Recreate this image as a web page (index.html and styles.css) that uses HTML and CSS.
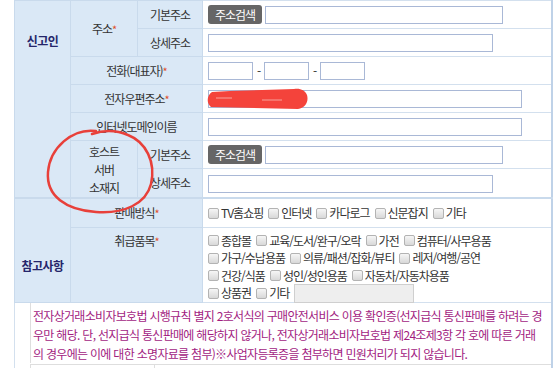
FILE: index.html
```html
<!DOCTYPE html>
<html lang="ko">
<head>
    <meta charset="UTF-8">
    <meta name="viewport" content="width=device-width, initial-scale=1.0">
    <title>통신판매업 신고</title>
    <link rel="stylesheet" href="styles.css">
</head>
<body>
    <div class="page">
        <table class="form">
            <colgroup>
                <col class="c-group">
                <col class="c-label">
                <col class="c-sub">
                <col>
            </colgroup>
            <tr>
                <th rowspan="7" class="group group-top">신고인</th>
                <th rowspan="2">주소<span class="req">*</span></th>
                <th>기본주소</th>
                <td><button class="btn-addr" type="button">주소검색</button><input class="txt w-addr" type="text"></td>
            </tr>
            <tr>
                <th>상세주소</th>
                <td><input class="txt w-detail" type="text"></td>
            </tr>
            <tr>
                <th colspan="2">전화(대표자)<span class="req">*</span></th>
                <td>
                    <input class="txt w-tel" type="text"><span class="dash">-</span><input class="txt w-tel" type="text"><span class="dash">-</span><input class="txt w-tel" type="text">
                </td>
            </tr>
            <tr>
                <th colspan="2">전자우편주소<span class="req">*</span></th>
                <td><input class="txt w-long" type="text"></td>
            </tr>
            <tr>
                <th colspan="2">인터넷도메인이름</th>
                <td><input class="txt w-long" type="text"></td>
            </tr>
            <tr>
                <th rowspan="2" class="multi">호스트<br>서버<br>소재지</th>
                <th>기본주소</th>
                <td><button class="btn-addr" type="button">주소검색</button><input class="txt w-addr" type="text"></td>
            </tr>
            <tr>
                <th>상세주소</th>
                <td><input class="txt w-detail" type="text"></td>
            </tr>
            <tr class="sep">
                <th rowspan="2" class="group group-ref">참고사항</th>
                <th colspan="2">판매방식<span class="req">*</span></th>
                <td>
                    <div class="chk-line">
                        <label class="chk"><input type="checkbox">TV홈쇼핑</label>
                        <label class="chk"><input type="checkbox">인터넷</label>
                        <label class="chk"><input type="checkbox">카다로그</label>
                        <label class="chk"><input type="checkbox">신문잡지</label>
                        <label class="chk"><input type="checkbox">기타</label>
                    </div>
                </td>
            </tr>
            <tr>
                <th colspan="2" class="top">취급품목<span class="req">*</span></th>
                <td class="items">
                    <div class="chk-line">
                        <label class="chk"><input type="checkbox">종합몰</label>
                        <label class="chk"><input type="checkbox">교육/도서/완구/오락</label>
                        <label class="chk"><input type="checkbox">가전</label>
                        <label class="chk"><input type="checkbox">컴퓨터/사무용품</label>
                    </div>
                    <div class="chk-line">
                        <label class="chk"><input type="checkbox">가구/수납용품</label>
                        <label class="chk"><input type="checkbox">의류/패션/잡화/뷰티</label>
                        <label class="chk"><input type="checkbox">레저/여행/공연</label>
                    </div>
                    <div class="chk-line">
                        <label class="chk"><input type="checkbox">건강/식품</label>
                        <label class="chk"><input type="checkbox">성인/성인용품</label>
                        <label class="chk"><input type="checkbox">자동차/자동차용품</label>
                    </div>
                    <div class="chk-line">
                        <label class="chk"><input type="checkbox">상품권</label>
                        <label class="chk"><input type="checkbox">기타</label>
                        <input class="txt w-etc" type="text" disabled>
                    </div>
                </td>
            </tr>
            <tr>
                <td colspan="4" class="notice-wrap">
                    <div class="notice">전자상거래소비자보호법 시행규칙 별지 2호서식의 구매안전서비스 이용 확인증(선지급식 통신판매를 하려는 경우만 해당. 단, 선지급식 통신판매에 해당하지 않거나, 전자상거래소비자보호법 제24조제3항 각 호에 따른 거래<br>의 경우에는 이에 대한 소명자료를 첨부)※사업자등록증을 첨부하면 민원처리가 되지 않습니다.</div>
                    <div class="next-row"><span class="next-label"></span></div>
                </td>
            </tr>
        </table>

        <!-- hand-drawn marks on the screenshot -->
        <svg class="marks" width="558" height="368" viewBox="0 0 558 368">
            <path class="scribble" d="M212 92 C207 95 206 103 211 107 L298 109 C305 108 309 102 307 95 C305 90 300 88 294 89 L230 91 Z"/>
            <path class="line-fade" d="M216 98 L232 98 M262 100 L282 100"/>
            <path class="circle" d="M96 131 C72 128 50 148 48 172 C46 196 66 210 96 212 C124 214 146 204 151 184 C156 162 146 142 128 135 C116 130 104 130 92 134"/>
        </svg>
    </div>
</body>
</html>
```

FILE: styles.css
```css
body {
    margin: 0;
    background: #fff;
    font-family: "Noto Sans CJK KR", "Noto Sans", sans-serif;
    font-size: 12px;
    letter-spacing: -1px;
    color: #333;
}
.page {
    position: relative;
    padding-left: 14px;
    height: 368px;
    overflow: hidden;
}
.form {
    width: 539px;
    table-layout: fixed;
    border-collapse: collapse;
    border-right: 2px solid #bfd2e8;
}
.c-group { width: 56px; }
.c-label { width: 67px; }
.c-sub { width: 65px; }
.form th,
.form td {
    border: 1px solid #c9daec;
    height: 27px;
    padding: 0;
    line-height: 16px;
}
.form th {
    background: #dae8f6;
    font-weight: normal;
    text-align: center;
}
.form td {
    background: #fff;
    padding-left: 5px;
    border-color: #d3e0ee;
}
.form th.group {
    vertical-align: top;
    font-weight: bold;
    color: #25256a;
    letter-spacing: -0.5px;
}
.form th.group-top { padding-top: 32px; }
.form th.group-ref { padding-top: 59px; }
.form th.multi { line-height: 18px; padding-top: 2px; }
.form th.top { vertical-align: top; padding-top: 5px; }
.form .sep th,
.form .sep td { border-top: 2px solid #c9daec; height: 28px; }
.req { color: #e0502a; font-size: 11px; }

.txt {
    box-sizing: border-box;
    height: 18px;
    margin: 0;
    padding: 0 3px;
    border: 1px solid #a9b8d6;
    background: #fff;
    vertical-align: middle;
}
.w-addr { width: 238px; }
.w-detail { width: 285px; }
.w-tel { width: 45px; }
.w-long { width: 314px; }
.w-etc {
    width: 120px;
    height: 19px;
    background: #eeeeee;
    border-color: #cfcfcf;
}
.dash {
    display: inline-block;
    width: 11px;
    text-align: center;
    vertical-align: middle;
}
.btn-addr {
    box-sizing: border-box;
    width: 54px;
    height: 19px;
    margin: 0 3px 0 0;
    padding: 0;
    border: 0;
    border-radius: 3px;
    background: #666;
    color: #fff;
    font: inherit;
    letter-spacing: -1px;
    vertical-align: middle;
}

.chk-line {
    display: flex;
    align-items: center;
    gap: 5px;
    height: 17.5px;
}
.form td.items { vertical-align: top; padding-top: 4px; }
.chk {
    display: inline-flex;
    align-items: center;
    white-space: nowrap;
}
.chk input {
    appearance: none;
    box-sizing: border-box;
    width: 11px;
    height: 11px;
    margin: 0 2px 0 0;
    border: 1px solid #b3b3b3;
    border-radius: 2px;
    background: linear-gradient(#f6f6f6, #d8d8d8);
}

.form td.notice-wrap {
    padding: 0 0 0 15px;
    border-top: 1px solid #bfd2e8;
    vertical-align: top;
}
.notice {
    border-left: 1px solid #dedede;
    padding: 3px 4px 0 2px;
    color: #a21c7f;
    letter-spacing: -0.7px;
    line-height: 19px;
}
.next-row {
    margin-top: 1px;
    border-top: 1px solid #dedede;
    border-left: 1px solid #dedede;
    height: 10px;
}
.next-label {
    display: block;
    width: 123px;
    height: 10px;
    border-right: 1px solid #dedede;
}

.marks {
    position: absolute;
    left: 0;
    top: 0;
    pointer-events: none;
}
.scribble { fill: #f4433b; }
.line-fade { stroke: #f7a39c; stroke-width: 1; fill: none; }
.circle {
    fill: none;
    stroke: #e8403a;
    stroke-width: 2.5;
    stroke-linecap: round;
}
```
